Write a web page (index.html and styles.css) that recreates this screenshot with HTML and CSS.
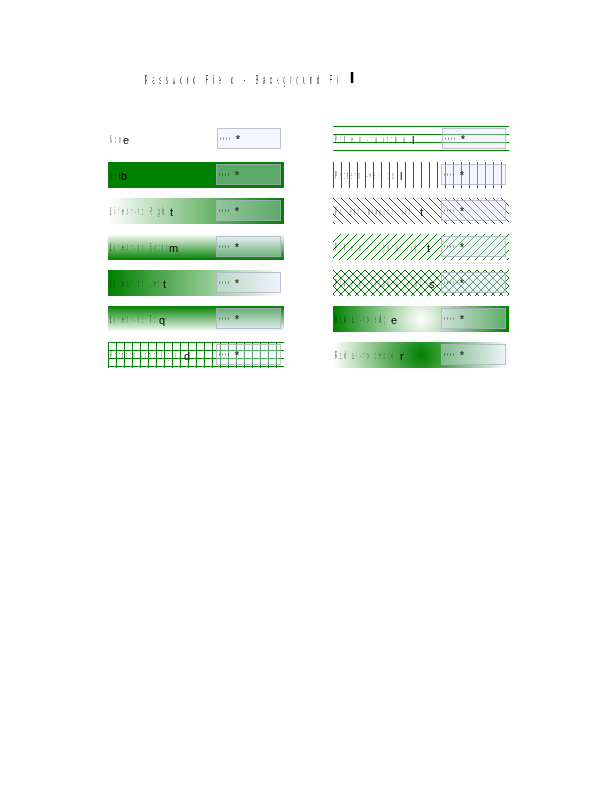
FILE: index.html
```html
<!DOCTYPE html>
<html>
  <head>
    <title>Password Field - Background Fill</title>
    <link rel="stylesheet" href="styles.css">
  </head>
  <body>
    <h1 class="title"><span class="thin">Password Field - Background Fil</span><span class="last">l</span></h1>

    <div class="columns">
      <div class="column">
        <div class="cell fill-none">
          <div class="label"><span class="thin">Non</span><span class="last">e</span></div>
          <div class="field"><span class="thin">****</span><span class="star">*</span></div>
        </div>
        <div class="cell fill-solid">
          <div class="label"><span class="thin">Sol</span><span class="last">b</span></div>
          <div class="field"><span class="thin">****</span><span class="star">*</span></div>
        </div>
        <div class="cell fill-right">
          <div class="label"><span class="thin">Linear-to Righ</span><span class="last">t</span></div>
          <div class="field"><span class="thin">****</span><span class="star">*</span></div>
        </div>
        <div class="cell fill-bottom">
          <div class="label"><span class="thin">Linear-to Botto</span><span class="last">m</span></div>
          <div class="field"><span class="thin">****</span><span class="star">*</span></div>
        </div>
        <div class="cell fill-left">
          <div class="label"><span class="thin">Linear-to Lef</span><span class="last">t</span></div>
          <div class="field"><span class="thin">****</span><span class="star">*</span></div>
        </div>
        <div class="cell fill-top">
          <div class="label"><span class="thin">Linear-to To</span><span class="last">q</span></div>
          <div class="field"><span class="thin">****</span><span class="star">*</span></div>
        </div>
        <div class="cell fill-grid">
          <div class="label"><span class="thin">Pattern -small gri</span><span class="last">d</span></div>
          <div class="field"><span class="thin">****</span><span class="star">*</span></div>
        </div>
      </div>

      <div class="column">
        <div class="cell fill-horizontal">
          <div class="label"><span class="thin">Pattern -horizonta</span><span class="last">l</span></div>
          <div class="field"><span class="thin">****</span><span class="star">*</span></div>
        </div>
        <div class="cell fill-vertical">
          <div class="label"><span class="thin">Pattern -vertica</span><span class="last">l</span></div>
          <div class="field"><span class="thin">****</span><span class="star">*</span></div>
        </div>
        <div class="cell fill-diag-left">
          <div class="label"><span class="thin">Pattern -diagonal lef</span><span class="last">t</span></div>
          <div class="field"><span class="thin">****</span><span class="star">*</span></div>
        </div>
        <div class="cell fill-diag-right">
          <div class="label"><span class="thin">Pattern -diagonal righ</span><span class="last">t</span></div>
          <div class="field"><span class="thin">****</span><span class="star">*</span></div>
        </div>
        <div class="cell fill-cross">
          <div class="label"><span class="thin">Pattern -diagonal cros</span><span class="last">s</span></div>
          <div class="field"><span class="thin">****</span><span class="star">*</span></div>
        </div>
        <div class="cell fill-edge">
          <div class="label"><span class="thin">Radial-to edg</span><span class="last">e</span></div>
          <div class="field"><span class="thin">****</span><span class="star">*</span></div>
        </div>
        <div class="cell fill-center">
          <div class="label"><span class="thin">Radial-to cente</span><span class="last">r</span></div>
          <div class="field"><span class="thin">****</span><span class="star">*</span></div>
        </div>
      </div>
    </div>
  </body>
</html>
```

FILE: styles.css
```css
/* squeezed text: glyphs are scaled narrow, the box width is set per row */
body {
  margin: 0;
  font-family: "Liberation Sans", Arial, sans-serif;
  background-color: #ffffff;
  color: #000000;
}

.thin {
  display: block;
  flex: none;
  width: 0;
  white-space: nowrap;
  transform: scaleX(0.3);
  transform-origin: 0 50%;
  will-change: transform;
}

.title {
  display: flex;
  margin: 0;
  padding: 72px 0 0 145px;
  height: 126px;
  box-sizing: border-box;
  font-size: 13px;
  line-height: 16px;
  font-weight: normal;
}

.title .thin {
  width: 205px;
  letter-spacing: 15.8px;
  opacity: 0.7;
}

.title .last {
  font-weight: bold;
  font-size: 14px;
  transform: scaleX(1.3);
}

.columns {
  display: flex;
  gap: 49px;
  padding-left: 108px;
}

.column {
  display: flex;
  flex-direction: column;
  gap: 10px;
  width: 176px;
}

.cell {
  display: flex;
  justify-content: space-between;
  height: 26px;
  padding: 2px 3px 0 2px;
  box-sizing: border-box;
}

.label {
  display: flex;
  padding-top: 6px;
  font-size: 10px;
  line-height: 12px;
}

.label .thin {
  letter-spacing: 9px;
  opacity: 0.45;
}

.last {
  font-size: 11px;
  line-height: 12px;
  will-change: transform;
}

.field {
  display: flex;
  align-items: flex-start;
  width: 65px;
  height: 21px;
  padding: 5px 0 0 2px;
  box-sizing: border-box;
  background-color: rgba(225, 230, 255, 0.4);
  border: 1px solid rgba(170, 170, 190, 0.7);
  font-size: 9px;
  line-height: 12px;
}

.field .thin {
  letter-spacing: 6.5px;
  opacity: 0.5;
}

.star {
  font-size: 10px;
  font-weight: bold;
  line-height: 12px;
  color: #333333;
  will-change: transform;
}

/* label widths */
.fill-none .thin { width: 13px; }
.fill-solid .thin { width: 11px; }
.fill-right .thin { width: 60px; }
.fill-bottom .thin { width: 59px; }
.fill-left .thin { width: 53px; }
.fill-top .thin { width: 49px; }
.fill-grid .thin { width: 74px; letter-spacing: 8.5px; }
.fill-horizontal .thin { width: 77px; }
.fill-vertical .thin { width: 65px; letter-spacing: 8.5px; }
.fill-diag-left .thin { width: 85px; letter-spacing: 8px; }
.fill-diag-right .thin { width: 92px; }
.fill-cross .thin { width: 94px; }
.fill-edge .thin { width: 56px; }
.fill-center .thin { width: 65px; }
.cell .field .thin { width: 16px; letter-spacing: 6.5px; }

.fill-none .field,
.fill-horizontal .field {
  width: 64px;
}

/* fills */
.fill-solid {
  background-color: #008000;
}

.fill-right {
  background-image: linear-gradient(to right, #ffffff, #008000);
}

.fill-bottom {
  background-image: linear-gradient(to bottom, #ffffff, #008000);
}

.fill-left {
  background-image: linear-gradient(to left, #ffffff, #008000);
}

.fill-top {
  background-image: linear-gradient(to top, #ffffff, #008000);
}

.fill-grid {
  background-image:
    linear-gradient(to right, #008000 1px, transparent 1px),
    linear-gradient(to bottom, #008000 1px, transparent 1px);
  background-size: 8px 8px;
}

.fill-horizontal {
  background-image: linear-gradient(to bottom, #008000 1px, transparent 1px);
  background-size: 8px 8px;
}

.fill-vertical {
  background-image: linear-gradient(to right, #008000 1px, transparent 1px);
  background-size: 8px 8px;
}

.fill-diag-left {
  background-image: url("data:image/svg+xml,%3Csvg xmlns='http://www.w3.org/2000/svg' width='8' height='8'%3E%3Cpath d='M-1 -1L9 9' stroke='%23008000' stroke-width='1.3' shape-rendering='crispEdges'/%3E%3C/svg%3E");
}

.fill-diag-right {
  background-image: url("data:image/svg+xml,%3Csvg xmlns='http://www.w3.org/2000/svg' width='8' height='8'%3E%3Cpath d='M9 -1L-1 9' stroke='%23008000' stroke-width='1.3' shape-rendering='crispEdges'/%3E%3C/svg%3E");
}

.fill-cross {
  background-image: url("data:image/svg+xml,%3Csvg xmlns='http://www.w3.org/2000/svg' width='8' height='8'%3E%3Cpath d='M-1 -1L9 9M9 -1L-1 9' stroke='%23008000' stroke-width='1.3' fill='none' shape-rendering='crispEdges'/%3E%3C/svg%3E");
}

.fill-edge {
  background-image: radial-gradient(circle 88px at center, #ffffff, #008000);
}

.fill-center {
  background-image: radial-gradient(circle 88px at center, #008000, #ffffff);
}
```
